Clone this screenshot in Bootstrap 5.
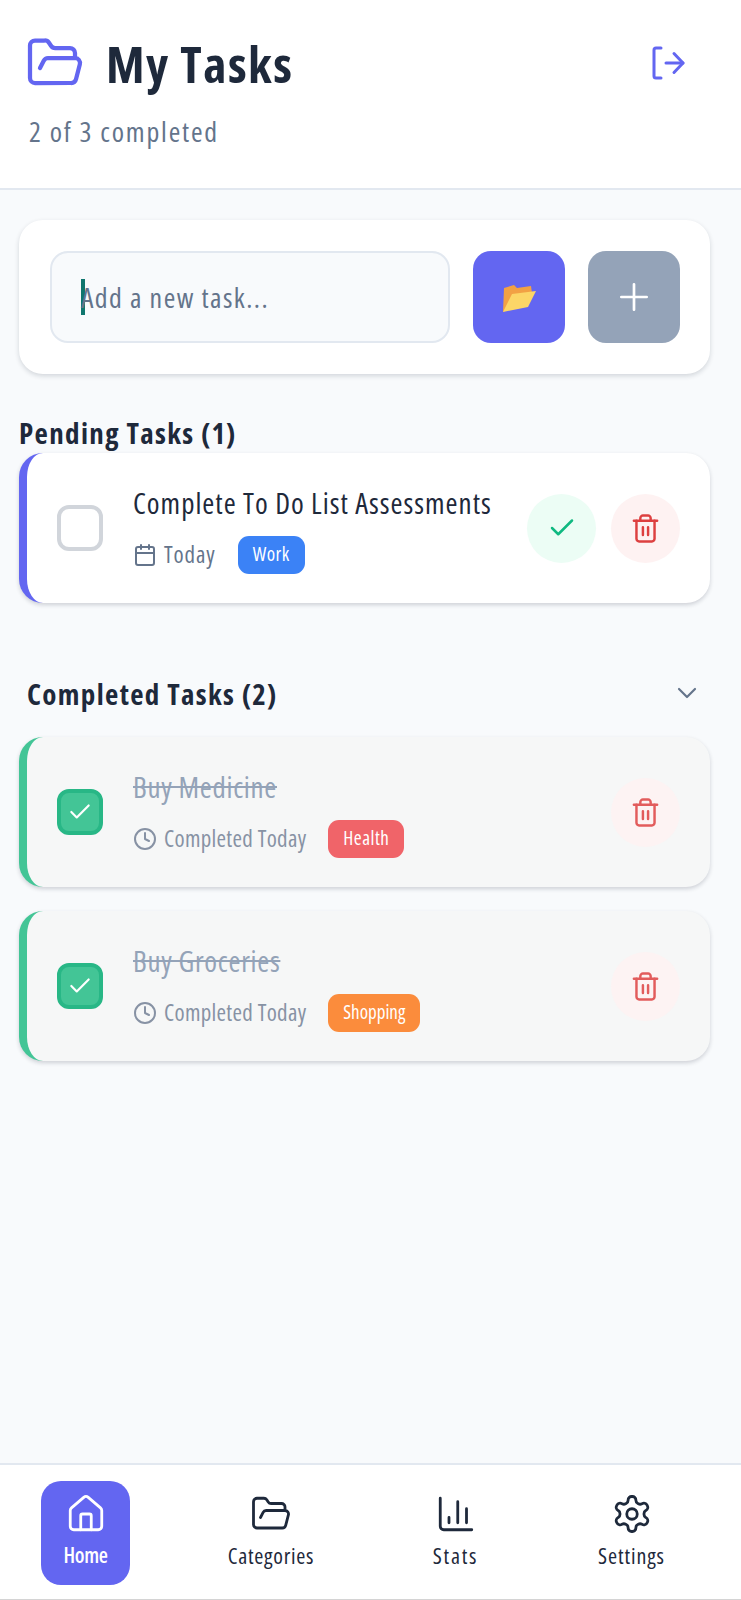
<!DOCTYPE html>
<html lang="en">
<head>
<meta charset="utf-8">
<title>My Tasks</title>
<link href="https://cdn.jsdelivr.net/npm/bootstrap@5.3.0/dist/css/bootstrap.min.css" rel="stylesheet">
<style>
html,body{height:1600px;margin:0;}
body{background:#f8fafc;font-family:"Open Sans","Liberation Sans",sans-serif;font-stretch:75%;color:#1e293b;width:741px;}
svg{display:block;fill:none;stroke:currentColor;stroke-linecap:round;stroke-linejoin:round;}
.app-shell{height:1600px;}
.top-bar{height:190px;background:#fff;border-bottom:2px solid #e2e8f0;padding:33px 40px 0 25px;}
.brand-ico{width:60px;height:60px;color:#6366f1;}
.page-title{font-size:50px;font-weight:700;line-height:60px;margin:1px 0 2px 21px;color:#1e293b;letter-spacing:1.5px;font-stretch:75%;}
.page-sub{font-size:28px;line-height:34px;color:#64748b;margin:18px 0 0 4px;letter-spacing:1.8px;}
.logout-ico{width:34px;height:34px;color:#6366f1;margin:13px 15px 0 0;}
.body-area{padding:30px 31px 0 19px;}
.add-panel{background:#fff;border-radius:24px;padding:31px 30px 31px 31px;height:154px;box-shadow:0 2px 5px rgba(15,23,42,.16);gap:23px;}
.fake-input{width:400px;height:92px;background:#f8fafc;border:2px solid #e2e8f0;border-radius:18px;padding-left:29px;font-size:28px;color:#64748b;letter-spacing:1.45px;}
.caret-mark{width:4px;height:36px;background:#0f766e;margin-right:-4px;}
.sq-btn{width:92px;height:92px;border-radius:18px;border:0;color:#fff;padding:0;}
.sq-purple{background:#6366f1;}
.sq-grey{background:#94a3b8;}
.section-head{font-size:29px;font-weight:700;line-height:34px;margin:0;color:#1e293b;letter-spacing:1.35px;font-stretch:75%;}
.pending-head{margin-top:42px;height:37px;}
.task-tile{background:#fff;border-left:8px solid #6366f1;border-radius:24px;height:150px;box-shadow:0 2px 4px rgba(15,23,42,.18);padding:0 30px;}
.task-tile.is-done{background:#f6f7f7;border-left-color:#43c596;}
.tick-box{width:46px;height:46px;border-radius:12px;border:4px solid #d1d5db;background:#fff;color:#fff;flex:none;}
.is-done .tick-box{background:#43c596;border-color:#28b786;}
.tile-text{margin-left:30px;margin-top:2px;}
.tile-name{font-size:29px;line-height:36px;color:#1e293b;letter-spacing:1px;white-space:nowrap;}
.is-done .tile-name{color:#94a3b8;text-decoration:line-through;letter-spacing:.7px;}
.tile-meta{font-size:23px;color:#64748b;letter-spacing:.9px;margin-top:15px;height:38px;}
.is-done .tile-meta{color:#8792a4;letter-spacing:.3px;}
.meta-ico{width:24px;height:24px;margin-right:7px;}
.tag-chip{height:38px;border-radius:11px;color:#fff;font-size:19px;padding:0 15px;margin-left:22px;letter-spacing:.5px;}
.chip-blue{background:#3b82f6;}
.chip-red{background:#f06469;}
.chip-orange{background:#fb8c3c;letter-spacing:0;}
.round-act{width:69px;height:69px;border-radius:50%;border:0;padding:0;flex:none;}
.act-ok{background:#ecfdf5;color:#10b981;margin-right:15px;}
.act-del{background:#fef2f2;color:#dd4040;}
.is-done .act-del{background:#fdf3f3;color:#e25c5c;}
.done-head{padding:0 7px 0 8px;height:34px;margin:74px 0 26px;}
.chev-ico{width:32px;height:32px;color:#64748b;margin-top:-2px;}
.stack-gap{height:24px;}
.dock{height:137px;background:#fff;border-top:2px solid #e2e8f0;border-bottom:1px solid #d4d4d4;padding:15px 0 14px 41px;}
.dock-item{font-size:22px;color:#1e293b;letter-spacing:.7px;line-height:26px;height:104px;border-radius:20px;font-weight:500;padding-bottom:4px;}
.dock-ico{width:42px;height:42px;margin-bottom:7px;}
.dock-home{width:89px;background:#6366f1;color:#fff;font-size:21px;letter-spacing:-.3px;font-weight:600;}
.dock-cat{width:116px;margin-left:83px;}
.dock-stats{width:77px;margin-left:88px;letter-spacing:1.8px;}
.dock-set{width:97px;margin-left:89px;letter-spacing:.9px;}
</style>
</head>
<body>
<div class="app-shell d-flex flex-column">
  <header class="top-bar">
    <div class="d-flex align-items-start justify-content-between">
      <div class="d-flex align-items-start">
        <svg class="brand-ico" viewBox="0 0 24 24" stroke-width="1.7"><path d="m6 14 1.5-2.9A2 2 0 0 1 9.24 10H20a2 2 0 0 1 1.94 2.5l-1.54 6a2 2 0 0 1-1.95 1.5H4a2 2 0 0 1-2-2V5a2 2 0 0 1 2-2h3.9a2 2 0 0 1 1.69.9l.81 1.2a2 2 0 0 0 1.67.9H18a2 2 0 0 1 2 2v2"/></svg>
        <h1 class="page-title">My Tasks</h1>
      </div>
      <svg class="logout-ico" viewBox="0 0 34 34" stroke-width="3"><path d="M9 2H4a2 2 0 0 0-2 2v26a2 2 0 0 0 2 2h5"/><path d="m22 7.5 9 9.5-9 9.5"/><path d="M31 17H14"/></svg>
    </div>
    <div class="page-sub">2 of 3 completed</div>
  </header>

  <main class="body-area flex-grow-1">
    <section class="add-panel d-flex align-items-center">
      <div class="fake-input d-flex align-items-center"><span class="caret-mark"></span><span>Add a new task...</span></div>
      <button class="sq-btn sq-purple d-flex align-items-center justify-content-center" type="button" aria-label="Choose category">
        <svg width="36" height="34" viewBox="0 0 36 34" style="stroke:none"><path d="M2 32 3 8l10-3 3 3 14-2 1 7z" fill="#f2a144"/><path d="M2 32 11 14 35 11 27 27z" fill="#fcd667"/></svg>
      </button>
      <button class="sq-btn sq-grey d-flex align-items-center justify-content-center" type="button" aria-label="Add">
        <svg width="38" height="38" viewBox="0 0 24 24" stroke-width="1.7"><path d="M12 4v16M4 12h16"/></svg>
      </button>
    </section>

    <h2 class="section-head pending-head">Pending Tasks (1)</h2>
    <article class="task-tile d-flex align-items-center">
      <span class="tick-box"></span>
      <div class="tile-text flex-grow-1">
        <div class="tile-name">Complete To Do List Assessments</div>
        <div class="tile-meta d-flex align-items-center">
          <svg class="meta-ico" viewBox="0 0 24 24" stroke-width="2"><rect x="3" y="4" width="18" height="18" rx="2"/><path d="M16 2v4M8 2v4M3 10h18"/></svg>
          <span>Today</span><span class="tag-chip chip-blue d-inline-flex align-items-center">Work</span>
        </div>
      </div>
      <button class="round-act act-ok d-flex align-items-center justify-content-center" type="button" aria-label="Complete"><svg width="30" height="30" viewBox="0 0 24 24" stroke-width="2"><path d="M20 6 9 17l-5-5"/></svg></button>
      <button class="round-act act-del d-flex align-items-center justify-content-center" type="button" aria-label="Delete"><svg width="31" height="31" viewBox="0 0 24 24" stroke-width="1.9"><path d="M3 6h18"/><path d="M19 6v14c0 1-1 2-2 2H7c-1 0-2-1-2-2V6"/><path d="M8 6V4c0-1 1-2 2-2h4c1 0 2 1 2 2v2"/><path d="M10 11v6M14 11v6"/></svg></button>
    </article>

    <div class="done-head d-flex align-items-center justify-content-between">
      <h2 class="section-head">Completed Tasks (2)</h2>
      <svg class="chev-ico" viewBox="0 0 24 24" stroke-width="1.6"><path d="m6 9 6 6 6-6"/></svg>
    </div>

    <article class="task-tile is-done d-flex align-items-center">
      <span class="tick-box d-flex align-items-center justify-content-center"><svg width="26" height="26" viewBox="0 0 24 24" stroke-width="2"><path d="M20 6 9 17l-5-5"/></svg></span>
      <div class="tile-text flex-grow-1">
        <div class="tile-name">Buy Medicine</div>
        <div class="tile-meta d-flex align-items-center">
          <svg class="meta-ico" viewBox="0 0 24 24" stroke-width="2"><circle cx="12" cy="12" r="10"/><path d="M12 6v6l4 2"/></svg>
          <span>Completed Today</span><span class="tag-chip chip-red d-inline-flex align-items-center">Health</span>
        </div>
      </div>
      <button class="round-act act-del d-flex align-items-center justify-content-center" type="button" aria-label="Delete"><svg width="31" height="31" viewBox="0 0 24 24" stroke-width="1.9"><path d="M3 6h18"/><path d="M19 6v14c0 1-1 2-2 2H7c-1 0-2-1-2-2V6"/><path d="M8 6V4c0-1 1-2 2-2h4c1 0 2 1 2 2v2"/><path d="M10 11v6M14 11v6"/></svg></button>
    </article>
    <div class="stack-gap"></div>
    <article class="task-tile is-done d-flex align-items-center">
      <span class="tick-box d-flex align-items-center justify-content-center"><svg width="26" height="26" viewBox="0 0 24 24" stroke-width="2"><path d="M20 6 9 17l-5-5"/></svg></span>
      <div class="tile-text flex-grow-1">
        <div class="tile-name">Buy Groceries</div>
        <div class="tile-meta d-flex align-items-center">
          <svg class="meta-ico" viewBox="0 0 24 24" stroke-width="2"><circle cx="12" cy="12" r="10"/><path d="M12 6v6l4 2"/></svg>
          <span>Completed Today</span><span class="tag-chip chip-orange d-inline-flex align-items-center">Shopping</span>
        </div>
      </div>
      <button class="round-act act-del d-flex align-items-center justify-content-center" type="button" aria-label="Delete"><svg width="31" height="31" viewBox="0 0 24 24" stroke-width="1.9"><path d="M3 6h18"/><path d="M19 6v14c0 1-1 2-2 2H7c-1 0-2-1-2-2V6"/><path d="M8 6V4c0-1 1-2 2-2h4c1 0 2 1 2 2v2"/><path d="M10 11v6M14 11v6"/></svg></button>
    </article>
  </main>

  <nav class="dock d-flex align-items-center">
    <a class="dock-item dock-home d-flex flex-column align-items-center justify-content-center text-decoration-none">
      <svg class="dock-ico" viewBox="0 0 24 24" stroke-width="1.6"><path d="M15 21v-8a1 1 0 0 0-1-1h-4a1 1 0 0 0-1 1v8"/><path d="M3 10a2 2 0 0 1 .709-1.528l7-5.999a2 2 0 0 1 2.582 0l7 5.999A2 2 0 0 1 21 10v9a2 2 0 0 1-2 2H5a2 2 0 0 1-2-2z"/></svg>
      <span>Home</span>
    </a>
    <a class="dock-item dock-cat d-flex flex-column align-items-center justify-content-center text-decoration-none">
      <svg class="dock-ico" viewBox="0 0 24 24" stroke-width="1.6"><path d="m6 14 1.5-2.9A2 2 0 0 1 9.24 10H20a2 2 0 0 1 1.94 2.5l-1.54 6a2 2 0 0 1-1.95 1.5H4a2 2 0 0 1-2-2V5a2 2 0 0 1 2-2h3.9a2 2 0 0 1 1.69.9l.81 1.2a2 2 0 0 0 1.67.9H18a2 2 0 0 1 2 2v2"/></svg>
      <span>Categories</span>
    </a>
    <a class="dock-item dock-stats d-flex flex-column align-items-center justify-content-center text-decoration-none">
      <svg class="dock-ico" viewBox="0 0 24 24" stroke-width="1.6"><path d="M3 3v16a2 2 0 0 0 2 2h16"/><path d="M18 17V9M13 17V5M8 17v-3"/></svg>
      <span>Stats</span>
    </a>
    <a class="dock-item dock-set d-flex flex-column align-items-center justify-content-center text-decoration-none">
      <svg class="dock-ico" viewBox="0 0 24 24" stroke-width="1.6"><path d="M12.22 2h-.44a2 2 0 0 0-2 2v.18a2 2 0 0 1-1 1.73l-.43.25a2 2 0 0 1-2 0l-.15-.08a2 2 0 0 0-2.73.73l-.22.38a2 2 0 0 0 .73 2.73l.15.1a2 2 0 0 1 1 1.72v.51a2 2 0 0 1-1 1.74l-.15.09a2 2 0 0 0-.73 2.73l.22.38a2 2 0 0 0 2.73.73l.15-.08a2 2 0 0 1 2 0l.43.25a2 2 0 0 1 1 1.73V20a2 2 0 0 0 2 2h.44a2 2 0 0 0 2-2v-.18a2 2 0 0 1 1-1.73l.43-.25a2 2 0 0 1 2 0l.15.08a2 2 0 0 0 2.73-.73l.22-.39a2 2 0 0 0-.73-2.73l-.15-.08a2 2 0 0 1-1-1.74v-.5a2 2 0 0 1 1-1.74l.15-.09a2 2 0 0 0 .73-2.73l-.22-.38a2 2 0 0 0-2.73-.73l-.15.08a2 2 0 0 1-2 0l-.43-.25a2 2 0 0 1-1-1.73V4a2 2 0 0 0-2-2z"/><circle cx="12" cy="12" r="3"/></svg>
      <span>Settings</span>
    </a>
  </nav>
</div>
</body>
</html>
